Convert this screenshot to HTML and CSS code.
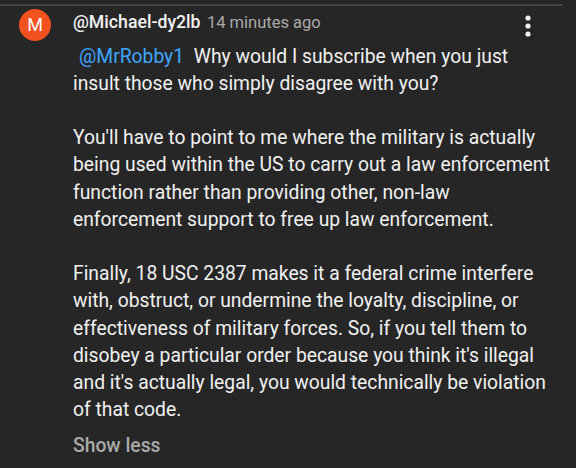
FILE: index.html
```html
<!DOCTYPE html>
<html lang="en">
<head>
<meta charset="utf-8">
<title>Comment</title>
<link rel="stylesheet" href="styles.css">
</head>
<body>
<div class="rule"></div>
<div class="comment">
  <div class="avatar">M</div>
  <div class="main">
    <div class="header">
      <span class="author">@Michael-dy2lb</span>
      <span class="time">14 minutes ago</span>
    </div>
    <div class="body">
      <p><span class="mention">@MrRobby1</span> Why would I subscribe when you just insult those who simply disagree with you?</p>
      <p>You'll have to point to me where the military is actually being used within the US to carry out a law enforcement function rather than providing other, non-law enforcement support to free up law enforcement.</p>
      <p>Finally, 18 USC 2387 makes it a federal crime interfere with, obstruct, or undermine the loyalty, discipline, or effectiveness of military forces. So, if you tell them to disobey a particular order because you think it's illegal and it's actually legal, you would technically be violation of that code.</p>
    </div>
    <div class="more">Show less</div>
  </div>
  <button class="menu" aria-label="Action menu">
    <svg width="8" height="24" viewBox="0 0 8 24"><circle cx="4" cy="4" r="2.6" fill="#f1f1f1"/><circle cx="4" cy="12" r="2.6" fill="#f1f1f1"/><circle cx="4" cy="20" r="2.6" fill="#f1f1f1"/></svg>
  </button>
</div>
</body>
</html>
```
FILE: styles.css
```css
html, body {
  margin: 0;
  padding: 0;
  background: #262626;
  height: 100%;
}
body {
  font-family: Roboto, "Noto Sans", Arial, sans-serif;
  color: #f1f1f1;
  overflow: hidden;
}
.rule {
  margin-top: 4px;
  width: 563px;
  height: 2px;
  background: #454545;
}
.comment {
  position: relative;
  display: flex;
  align-items: flex-start;
  padding: 3px 0 0 19px;
}
.avatar {
  flex: none;
  width: 32px;
  height: 32px;
  border-radius: 50%;
  background: #f1521f;
  color: #fff;
  font-size: 18px;
  line-height: 32px;
  text-align: center;
}
.main {
  margin-left: 22px;
  width: 482px;
}
.header {
  font-size: 17.7px;
  line-height: 24.5px;
  margin-top: 1px;
}
.author {
  font-weight: 500;
  color: #f1f1f1;
}
.time {
  color: #aaaaaa;
  font-size: 16.5px;
  margin-left: 2px;
}
.body {
  margin-top: 7px;
  font-size: 19.3px;
  line-height: 27.2px;
}
.body p {
  margin: 0 0 27.2px;
}
.body p:last-child {
  margin-bottom: 0;
}
.mention {
  color: #3ea6ff;
  margin: 0 5px 0 6px;
}
.more {
  margin-top: 9px;
  font-size: 19.3px;
  line-height: 27.2px;
  font-weight: 500;
  color: #aaaaaa;
}
.menu {
  position: absolute;
  top: 4px;
  left: 508px;
  width: 40px;
  height: 32px;
  padding: 0;
  border: 0;
  background: transparent;
  display: flex;
  align-items: center;
  justify-content: center;
}
```
